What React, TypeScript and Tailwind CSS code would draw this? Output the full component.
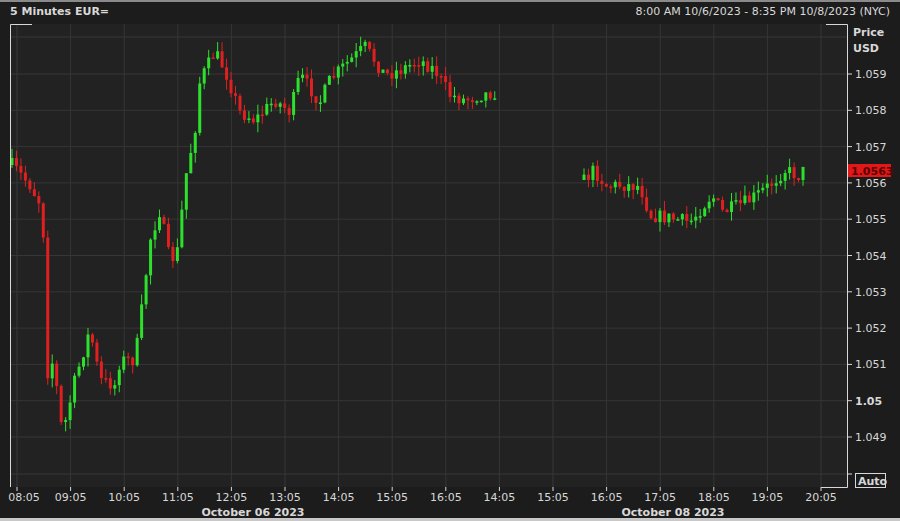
import React from "react";

const keys1: [number, number][] = [
  [12, 165], [30, 185], [38, 200], [43, 205], [45, 400], [50, 350], [58, 395], [62, 432], [66, 420], [75, 380],
  [90, 330], [100, 380], [115, 385], [120, 360], [135, 360], [143, 300], [150, 240], [160, 210], [170, 262],
  [178, 250], [185, 180], [195, 130], [200, 80], [215, 52], [225, 70], [240, 112], [255, 120], [275, 100],
  [290, 112], [300, 75], [320, 102], [330, 80], [345, 65], [365, 47], [385, 75], [400, 70], [420, 60],
  [435, 70], [450, 95], [465, 100], [480, 95], [495, 92],
];
const keys2: [number, number][] = [
  [584, 180], [594, 170], [600, 178], [607, 186], [620, 185], [640, 186], [650, 215], [670, 218], [690, 222],
  [700, 210], [712, 195], [722, 212], [735, 207], [750, 200], [770, 185], [785, 170], [800, 176], [807, 165],
];

let seed = 7;
const rnd = () => {
  seed = (seed * 16807) % 2147483647;
  return seed / 2147483647;
};

function interp(keys: [number, number][], x: number) {
  for (let i = 0; i < keys.length - 1; i++) {
    const [x0, y0] = keys[i];
    const [x1, y1] = keys[i + 1];
    if (x >= x0 && x <= x1) return y0 + ((x - x0) / (x1 - x0)) * (y1 - y0);
  }
  return keys[keys.length - 1][1];
}

type Candle = { x: number; o: number; c: number; h: number; l: number };

function build(keys: [number, number][]) {
  const out: Candle[] = [];
  const start = keys[0][0];
  const end = keys[keys.length - 1][0];
  let prev = keys[0][1];
  for (let x = start; x <= end; x += 4.47) {
    const c = interp(keys, x) + (rnd() - 0.5) * 14;
    const o = prev;
    const h = Math.min(o, c) - rnd() * 10;
    const l = Math.max(o, c) + rnd() * 10;
    out.push({ x, o, c, h, l });
    prev = c;
  }
  return out;
}

const candles = [...build(keys1), ...build(keys2)];

const priceTicks = ["1.059", "1.058", "1.057", "1.056", "1.055", "1.054", "1.053", "1.052", "1.051", "1.05", "1.049"];
const timeLabels = ["08:05", "09:05", "10:05", "11:05", "12:05", "13:05", "14:05", "15:05", "16:05", "14:05", "15:05", "16:05", "17:05", "18:05", "19:05", "20:05"];

export default function App() {
  const font = { fontFamily: "Tahoma, 'DejaVu Sans', sans-serif" };
  return (
    <div className="w-[900px] h-[521px] bg-[#1c1c1c] border-t-2 border-[#8a8a8a] flex flex-col overflow-hidden" style={font}>
      <div className="h-[20px] flex items-center justify-between px-[10px] text-[11px] text-[#d8d8d8]">
        <span className="font-bold">5 Minutes EUR=</span>
        <span>8:00 AM 10/6/2023 - 8:35 PM 10/8/2023 (NYC)</span>
      </div>
      <svg width="900" height="496" viewBox="0 22 900 496" className="block">
        <rect x="10" y="24" width="837" height="463" fill="#222222" />
        {priceTicks.map((_, i) => {
          const y = 74 + i * 36.3;
          return <line key={i} x1="10" x2="847" y1={y} y2={y} stroke="#363636" />;
        })}
        <line x1="10" x2="847" y1="474" y2="474" stroke="#363636" />
        <line x1="10" x2="847" y1="37" y2="37" stroke="#363636" />
        {timeLabels.map((_, i) => {
          const x = 17 + i * 53.6;
          return <line key={i} x1={x} x2={x} y1="24" y2="487" stroke="#363636" />;
        })}
        {candles.map((k, i) => {
          const up = k.c < k.o;
          const col = up ? "#2ee02e" : "#e02020";
          const top = Math.min(k.o, k.c);
          const hgt = Math.max(1.5, Math.abs(k.o - k.c));
          return (
            <g key={i}>
              <line x1={k.x} x2={k.x} y1={k.h} y2={k.l} stroke={col} strokeWidth="1" />
              <rect x={k.x - 1.5} y={top} width="3" height={hgt} fill={col} />
            </g>
          );
        })}
        <path d="M10.5 487 V24.5 H32" stroke="#d8d8d8" fill="none" />
        <path d="M821 487.5 H847.5 V24.5 H826" stroke="#d8d8d8" fill="none" />
        <text x="853" y="36" fill="#d8d8d8" fontSize="11" fontWeight="bold">Price</text>
        <text x="853" y="52" fill="#d8d8d8" fontSize="11" fontWeight="bold">USD</text>
        {priceTicks.map((p, i) => {
          const y = 74 + i * 36.3;
          return (
            <g key={p}>
              <line x1="847" x2="852" y1={y} y2={y} stroke="#d8d8d8" />
              <text x="855" y={y + 4} fill="#d8d8d8" fontSize="11" fontWeight={p === "1.05" ? "bold" : "normal"}>{p}</text>
            </g>
          );
        })}
        <rect x="848" y="164" width="43" height="13" fill="#e01818" />
        <text x="851" y="175" fill="#5a0000" fontSize="11" fontWeight="bold">1.0563</text>
        <line x1="847" x2="852" y1="474" y2="474" stroke="#d8d8d8" />
        <rect x="855.5" y="473.5" width="30" height="14" fill="none" stroke="#d8d8d8" />
        <text x="858" y="485" fill="#d8d8d8" fontSize="11" fontWeight="bold">Auto</text>
        {timeLabels.map((t, i) => {
          const x = 17 + i * 53.6;
          return (
            <g key={i}>
              <line x1={x} x2={x} y1="487" y2="491" stroke="#d8d8d8" />
              <text x={i === 0 ? 24 : x} y="501" fill="#d8d8d8" fontSize="11" textAnchor="middle">{t}</text>
            </g>
          );
        })}
        <text x="253" y="516" fill="#d8d8d8" fontSize="11" fontWeight="bold" textAnchor="middle">October 06 2023</text>
        <text x="673" y="516" fill="#d8d8d8" fontSize="11" fontWeight="bold" textAnchor="middle">October 08 2023</text>
      </svg>
      <div className="h-[3px] bg-[#c8c8c8]" />
    </div>
  );
}
